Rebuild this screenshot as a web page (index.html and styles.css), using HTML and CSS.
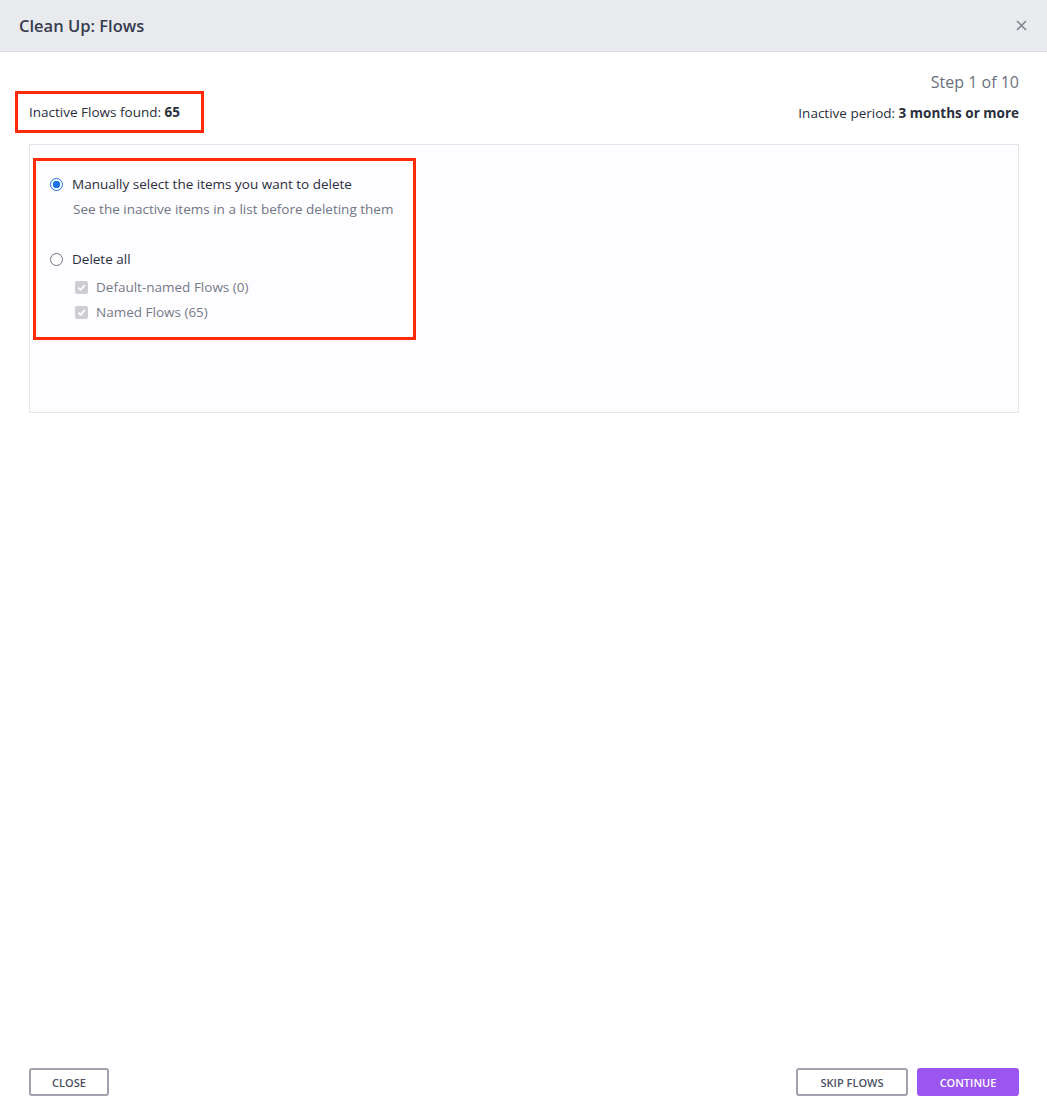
FILE: index.html
```html
<!DOCTYPE html>
<html lang="en">
<head>
  <meta charset="UTF-8">
  <title>Clean Up: Flows</title>
  <link rel="stylesheet" href="styles.css">
</head>
<body>
  <div class="modal">
    <div class="modal-header">
      <h2>Clean Up: Flows</h2>
      <svg class="close-x" width="11" height="11" viewBox="0 0 11 11"><path d="M1 1 L10 10 M10 1 L1 10" stroke="#80838c" stroke-width="1.6" fill="none"/></svg>
    </div>

    <div class="modal-body">
      <div class="step">Step 1 of 10</div>
      <div class="summary">
        <div class="found mark">Inactive Flows found: <b>65</b></div>
        <div class="period">Inactive period: <b>3 months or more</b></div>
      </div>

      <div class="panel">
        <div class="options mark">
          <label class="radio">
            <span class="dot checked"></span>
            Manually select the items you want to delete
          </label>
          <div class="hint">See the inactive items in a list before deleting them</div>

          <label class="radio second">
            <span class="dot"></span>
            Delete all
          </label>
          <label class="check">
            <span class="box">
              <svg width="9" height="9" viewBox="0 0 10 10"><path d="M1.5 5.2 L4 7.6 L8.6 2.4" fill="none" stroke="#fff" stroke-width="1.8"/></svg>
            </span>
            Default-named Flows (0)
          </label>
          <label class="check">
            <span class="box">
              <svg width="9" height="9" viewBox="0 0 10 10"><path d="M1.5 5.2 L4 7.6 L8.6 2.4" fill="none" stroke="#fff" stroke-width="1.8"/></svg>
            </span>
            Named Flows (65)
          </label>
        </div>
      </div>
    </div>

    <div class="modal-footer">
      <button class="btn close">Close</button>
      <div class="right">
        <button class="btn skip">Skip Flows</button>
        <button class="btn primary">Continue</button>
      </div>
    </div>
  </div>
</body>
</html>
```

FILE: styles.css
```css
body {
  margin: 0;
  font-family: "Open Sans", Lato, sans-serif;
  background-color: #fff;
  color: #2f3442;
}
.modal {
  height: 1116px;
  display: flex;
  flex-direction: column;
}
.modal-header {
  height: 51px;
  background-color: #e9eaee;
  border-bottom: 1px solid #dcdde2;
  display: flex;
  align-items: center;
  justify-content: space-between;
  padding: 0 20px 0 19px;
}
.modal-header h2 {
  margin: 0;
  font-size: 16.5px;
  font-weight: 600;
  color: #363c4e;
}
.modal-body {
  flex: 1;
  padding: 21px 28px 0 29px;
}
.step {
  text-align: right;
  font-size: 16px;
  line-height: 18px;
  color: #6b6f7c;
}
.summary {
  display: flex;
  justify-content: space-between;
  align-items: center;
  font-size: 13.5px;
  color: #2a2f3c;
}
.summary b {
  font-weight: 700;
}
.mark {
  border: 3px solid #ff2a0a;
}
.found {
  margin-left: -14px;
  padding: 0 21px 0 11px;
  height: 36px;
  line-height: 36px;
}
.period {
  padding-top: 1px;
}
.panel {
  margin-top: 11px;
  height: 254px;
  border: 1px solid #e6e6ea;
  background-color: #fdfcff;
  padding: 13px 0 0 3px;
}
.options {
  width: 383px;
  height: 182px;
  box-sizing: border-box;
  font-size: 13.5px;
  line-height: 18px;
}
.radio {
  display: flex;
  align-items: center;
  margin: 14px 0 0 14px;
  color: #2a2f3c;
}
.radio.second {
  margin-top: 32px;
}
.dot {
  width: 11px;
  height: 11px;
  border: 1px solid #6f7380;
  border-radius: 50%;
  margin-right: 9px;
  background-color: #fff;
}
.dot.checked {
  border-color: #1a73e8;
  background: radial-gradient(circle, #1a73e8 0 3.5px, #fff 4px);
}
.hint {
  margin: 7px 0 0 37px;
  color: #717684;
}
.check {
  display: flex;
  align-items: center;
  margin: 10px 0 0 39px;
  color: #777b88;
}
.check + .check {
  margin-top: 7px;
}
.box {
  width: 13px;
  height: 13px;
  border-radius: 2px;
  background-color: #cdcdd2;
  margin-right: 8px;
  display: flex;
  align-items: center;
  justify-content: center;
}
.modal-footer {
  display: flex;
  justify-content: space-between;
  padding: 0 28px 20px 29px;
}
.right {
  display: flex;
  gap: 9px;
}
.btn {
  height: 28px;
  padding: 0;
  border: 2px solid #a0a3ad;
  border-radius: 3px;
  background-color: #fff;
  color: #4a4f61;
  font-family: "Open Sans", sans-serif;
  font-size: 11px;
  font-weight: 600;
  text-transform: uppercase;
}
.btn.close {
  width: 80px;
}
.btn.skip {
  width: 112px;
}
.btn.primary {
  width: 102px;
  background-color: #9a56ee;
  border-color: #9a56ee;
  color: #fff;
}
```
